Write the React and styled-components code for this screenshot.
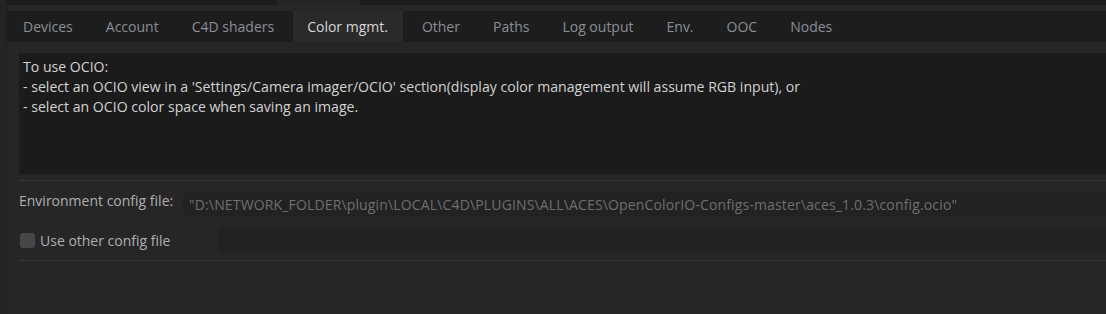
import React from "react";
import styled, { createGlobalStyle } from "styled-components";

const Global = createGlobalStyle`
  html, body { margin: 0; padding: 0; background: #262626; }
  body { font-family: "Open Sans", "Noto Sans", sans-serif; }
`;

const Frame = styled.div`
  display: flex;
  width: 1106px;
  height: 314px;
  background: #262626;
  overflow: hidden;
`;

const Gutter = styled.div`
  width: 7px;
  flex: none;
  background: #242424;
  border-right: 1px solid #1e1e1e;
  box-sizing: border-box;
`;

const Main = styled.div`
  flex: 1;
  display: flex;
  flex-direction: column;
  min-width: 0;
`;

const TopStrip = styled.div`
  display: flex;
  height: 5px;
`;

const StripSeg = styled.div`
  background: ${(p) => (p.$light ? "#252525" : "#1b1b1b")};
  width: ${(p) => (p.$w ? `${p.$w}px` : "auto")};
  flex: ${(p) => (p.$w ? "none" : "1")};
`;

const Band = styled.div`
  height: 6px;
  background: #272727;
`;

const TabBar = styled.div`
  display: flex;
  gap: 1px;
  height: 31px;
  background: #1d1d1d;
`;

const Tab = styled.div`
  display: flex;
  align-items: center;
  padding: ${(p) => (p.$active ? "0 15px 0 14px" : "0 16px")};
  margin: 0 ${(p) => (p.$active ? 2 : 0)}px;
  background: ${(p) => (p.$active ? "#2a2a2a" : "transparent")};
  color: ${(p) => (p.$active ? "#d6d6d6" : "#8b8e96")};
  font-size: 14px;
  white-space: nowrap;
`;

const Content = styled.div`
  padding: 11px 0 0 12px;
  display: flex;
  flex-direction: column;
`;

const InfoBox = styled.div`
  height: 121px;
  background: #1b1b1b;
  padding: 4px 4px;
  box-sizing: border-box;
  color: #d2d2d2;
  font-size: 14.1px;
  line-height: 20px;
`;

const Line = styled.div`
  white-space: nowrap;
`;

const Divider = styled.div`
  height: 1px;
  background: #353535;
  margin-top: ${(p) => p.$mt}px;
`;

const Row = styled.div`
  display: flex;
  align-items: ${(p) => p.$align || "center"};
  margin-top: ${(p) => p.$mt}px;
`;

const Label = styled.div`
  color: #aeaeb2;
  font-size: 14px;
  white-space: nowrap;
  width: ${(p) => p.$w}px;
  flex: none;
  line-height: 18px;
`;

const Field = styled.div`
  flex: 1;
  height: 25px;
  background: #222222;
  border-radius: 4px 0 0 4px;
  display: flex;
  align-items: center;
  padding-left: 6px;
  color: #6f6f6f;
  font-size: 14px;
  letter-spacing: 0.15px;
  white-space: nowrap;
  overflow: hidden;
`;

const Check = styled.div`
  width: 15px;
  height: 15px;
  border-radius: 3px;
  background: #474747;
  margin: 0 5px 0 1px;
  flex: none;
`;

export default function App() {
  const tabs = [
    "Devices",
    "Account",
    "C4D shaders",
    "Color mgmt.",
    "Other",
    "Paths",
    "Log output",
    "Env.",
    "OOC",
    "Nodes",
  ];
  return (
    <>
      <Global />
      <Frame>
        <Gutter />
        <Main>
          <TopStrip>
            <StripSeg $w={270} />
            <StripSeg $w={83} $light />
            <StripSeg />
          </TopStrip>
          <Band />
          <TabBar>
            {tabs.map((t) => (
              <Tab key={t} $active={t === "Color mgmt."}>
                {t}
              </Tab>
            ))}
          </TabBar>
          <Content>
            <InfoBox>
              <Line>To use OCIO:</Line>
              <Line>
                - select an OCIO view in a 'Settings/Camera imager/OCIO'
                section(display color management will assume RGB input), or
              </Line>
              <Line>- select an OCIO color space when saving an image.</Line>
            </InfoBox>
            <Divider $mt={6} />
            <Row $mt={11} $align="flex-start">
              <Label $w={164}>Environment config file:</Label>
              <Field>
                "D:\NETWORK_FOLDER\plugin\LOCAL\C4D\PLUGINS\ALL\ACES\OpenColorIO-Configs-master\aces_1.0.3\config.ocio"
              </Field>
            </Row>
            <Row $mt={11}>
              <Check />
              <Label $w={178}>Use other config file</Label>
              <Field />
            </Row>
            <Divider $mt={7} />
          </Content>
        </Main>
      </Frame>
    </>
  );
}
